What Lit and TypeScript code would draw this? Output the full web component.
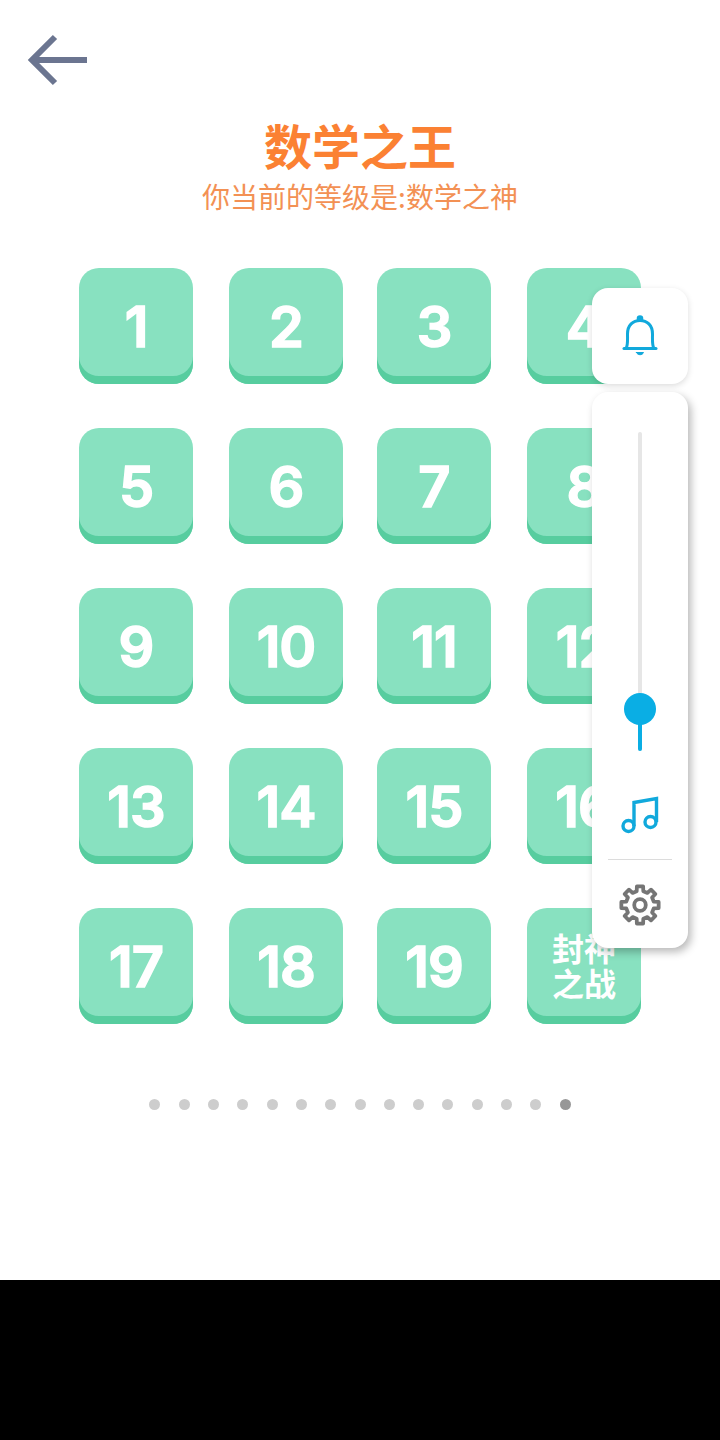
import { LitElement, css, html, svg } from "lit";
import { customElement, property } from "lit/decorators.js";

// cog outline, 8 teeth, centred on 20,20
function gearPath(): string {
  const teeth = 8;
  const outer = 18;
  const inner = 13.5;
  const pts: string[] = [];
  for (let i = 0; i < teeth; i++) {
    const a = (i * Math.PI * 2) / teeth - Math.PI / 2;
    const step = Math.PI / teeth;
    [
      [inner, a - step * 0.6],
      [outer, a - step * 0.42],
      [outer, a + step * 0.42],
      [inner, a + step * 0.6],
    ].forEach(([r, t]) => {
      pts.push(`${(20 + r * Math.cos(t)).toFixed(2)} ${(20 + r * Math.sin(t)).toFixed(2)}`);
    });
  }
  return `M${pts.join("L")}Z`;
}

@customElement("level-tile")
export class LevelTile extends LitElement {
  static styles = css`
    :host {
      display: block;
    }
    .tile {
      width: 114px;
      height: 116px;
      box-sizing: border-box;
      padding-top: 2px;
      border-radius: 20px;
      background: #88e1c0;
      box-shadow: inset 0 -8px 0 #57cd9f;
      display: flex;
      align-items: center;
      justify-content: center;
      color: #fff;
    }
    .num {
      font-family: Inter, sans-serif;
      font-weight: 600;
      font-size: 56px;
      letter-spacing: -1px;
      line-height: 1;
      -webkit-text-stroke: 1.5px #fff;
    }
    .word {
      font-family: "Noto Sans CJK SC", "Noto Sans", sans-serif;
      font-weight: 700;
      font-size: 32px;
      line-height: 35px;
      text-align: center;
      width: 64px;
      margin-top: -4px;
    }
  `;

  @property({ type: String })
  label: string = "";

  render() {
    const isWord = this.label.length > 2;
    return html`<div class="tile">
      <div class=${isWord ? "word" : "num"}>${this.label}</div>
    </div>`;
  }
}

@customElement("app-root")
export class AppRoot extends LitElement {
  static styles = css`
    :host {
      display: block;
      width: 720px;
      height: 1440px;
      background: #000;
      position: relative;
      overflow: hidden;
    }
    .page {
      height: 1280px;
      background: #fff;
      display: flex;
      flex-direction: column;
      font-family: "Noto Sans CJK SC", "Noto Sans", sans-serif;
    }
    .back {
      height: 116px;
      padding: 32px 0 0 26px;
      box-sizing: border-box;
    }
    .back svg {
      display: block;
    }
    .title {
      text-align: center;
      color: #fb8133;
      font-size: 48px;
      font-weight: 700;
      line-height: 56px;
    }
    .subtitle {
      text-align: center;
      color: #f39154;
      font-size: 28px;
      font-weight: 400;
      line-height: 48px;
    }
    .grid {
      display: grid;
      grid-template-columns: 150px 148px 150px 114px;
      row-gap: 44px;
      width: 562px;
      margin: 48px 0 0 79px;
    }
    .dots {
      display: flex;
      justify-content: center;
      gap: 18.3px;
      margin-top: 75px;
    }
    .dot {
      width: 11px;
      height: 11px;
      border-radius: 50%;
      background: #cdcdcd;
    }
    .dot.on {
      background: #979797;
    }
    .panel {
      position: absolute;
      left: 592px;
      width: 96px;
      background: #fff;
      border-radius: 16px;
    }
    .bell {
      top: 288px;
      height: 96px;
      box-shadow: 0 2px 6px rgba(0, 0, 0, 0.14);
      display: flex;
      align-items: center;
      justify-content: center;
    }
    .controls {
      top: 392px;
      height: 556px;
      box-shadow: 3px 4px 8px rgba(0, 0, 0, 0.28);
      display: flex;
      flex-direction: column;
      align-items: center;
    }
    .slider {
      margin-top: 40px;
      width: 4px;
      height: 319px;
      border-radius: 2px;
      background: #e6e6e6;
      position: relative;
    }
    .fill {
      position: absolute;
      left: 0;
      bottom: 0;
      width: 4px;
      height: 42px;
      border-radius: 2px;
      background: #0aaee4;
    }
    .thumb {
      position: absolute;
      left: -14px;
      bottom: 26px;
      width: 32px;
      height: 32px;
      border-radius: 50%;
      background: #0aaee4;
    }
    .note {
      margin-top: 45px;
      display: block;
    }
    .sep {
      width: 64px;
      height: 1px;
      background: #dcdcdc;
      margin-top: 25px;
    }
    .gear {
      margin-top: 24px;
      display: block;
    }
  `;

  private tiles: string[] = [
    ...Array.from({ length: 19 }, (_, i) => String(i + 1)),
    "封神之战",
  ];

  render() {
    return html`
      <div class="page">
        <div class="back">
          <svg width="64" height="56" viewBox="0 0 64 56" fill="none" stroke="#6b7590" stroke-width="6">
            <path d="M61 28H7" />
            <path d="M29 5L6 28L29 51" />
          </svg>
        </div>
        <div class="title">数学之王</div>
        <div class="subtitle">你当前的等级是:数学之神</div>
        <div class="grid">
          ${this.tiles.map((t) => html`<level-tile label=${t}></level-tile>`)}
        </div>
        <div class="dots">
          ${Array.from({ length: 15 }, (_, i) => html`<div class="dot ${i === 14 ? "on" : ""}"></div>`)}
        </div>
      </div>

      <div class="panel bell">
        <svg width="36" height="42" viewBox="0 0 36 42" fill="none" stroke="#11a9dc" stroke-width="3" stroke-linecap="round" stroke-linejoin="round">
          <path d="M2 33.5H34" />
          <path d="M4 33.5C6 30.5 5.5 27 5.5 19C5.5 10 11 5.5 18 5.5C25 5.5 30.5 10 30.5 19C30.5 27 30 30.5 32 33.5" />
          <circle cx="18" cy="3.6" r="1.8" fill="#11a9dc" />
          <path d="M14.5 37.5H21.5C20.5 40.5 15.5 40.5 14.5 37.5Z" fill="#11a9dc" stroke-width="1" />
        </svg>
      </div>

      <div class="panel controls">
        <div class="slider">
          <div class="fill"></div>
          <div class="thumb"></div>
        </div>
        <svg class="note" width="38" height="38" viewBox="0 0 38 38" fill="none" stroke="#11a9dc" stroke-width="3.4">
          <circle cx="7.5" cy="30" r="5.5" />
          <circle cx="29.5" cy="26" r="5.5" />
          <path d="M13 30V6.5L35.5 2.5V26" />
        </svg>
        <div class="sep"></div>
        <svg class="gear" width="42" height="42" viewBox="0 0 40 40" fill="none" stroke="#757575" stroke-width="3.6" stroke-linejoin="round">
          ${svg`<path d=${gearPath()} />`}
          <circle cx="20" cy="20" r="5.5" />
        </svg>
      </div>
    `;
  }
}
